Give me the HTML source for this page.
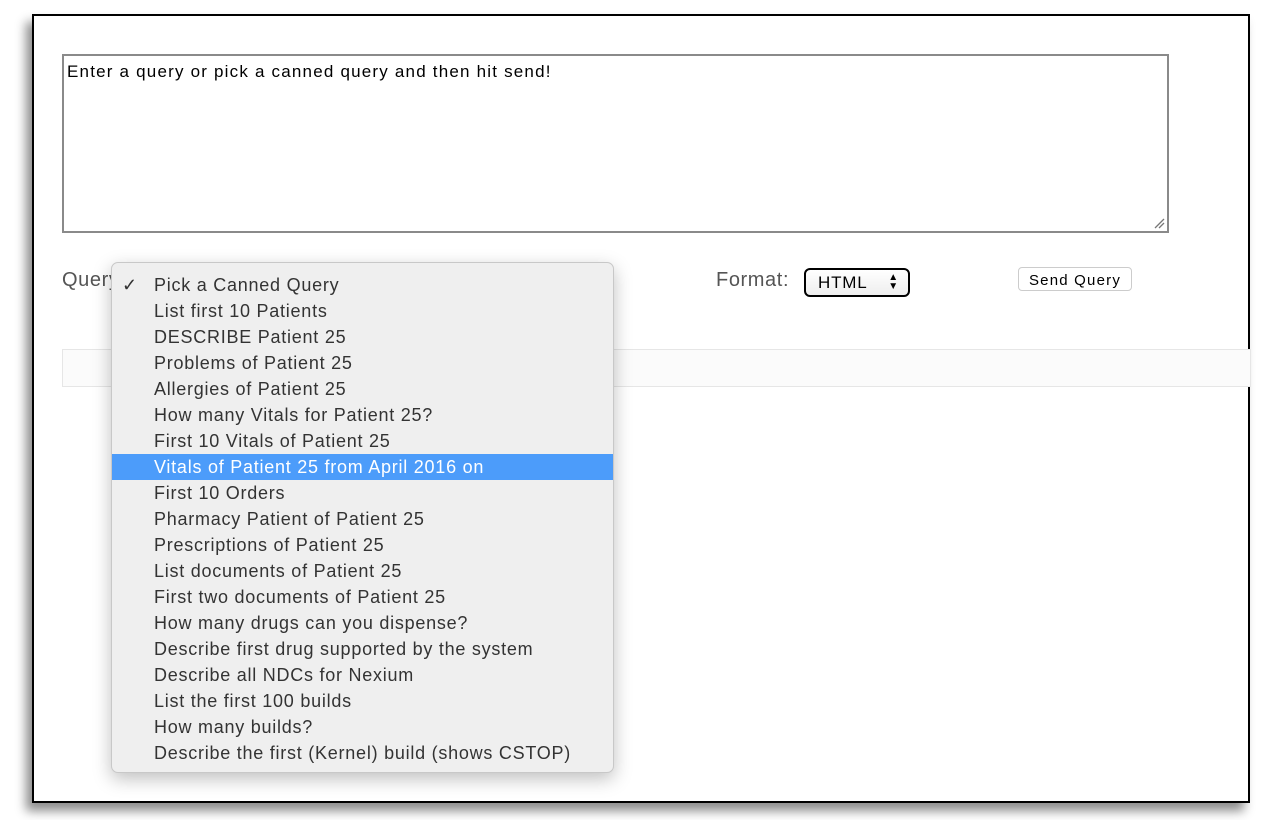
<!DOCTYPE html>
<html><head><style>
body{margin:0;width:1276px;height:820px;background:#fff;position:relative;overflow:hidden;font-family:"Liberation Sans",sans-serif}
.win{position:absolute;left:32px;top:14px;width:1214px;height:785px;border:2px solid #000;background:#fff;box-shadow:-6px 8px 10px rgba(0,0,0,.45)}
.ta{position:absolute;left:62px;top:54px;width:1103px;height:175px;border:2px solid #8a8a8a;background:#fff;font-size:17px;letter-spacing:1.2px;color:#000}
.ta span{position:absolute;left:3px;top:6px}
.bar{position:absolute;left:62px;top:349px;width:1187px;height:36px;border:1px solid #e6e6e6;background:#fbfbfb}
.lbl{position:absolute;font-size:20px;color:#555;letter-spacing:0.6px}
.sel{position:absolute;left:804px;top:268px;width:106px;height:29px;border:2px solid #000;border-radius:6px;background:linear-gradient(#fff,#eee);font-size:17px;letter-spacing:0.8px;box-sizing:border-box}
.btn{position:absolute;left:1018px;top:267px;width:114px;height:24px;border:1px solid #ccc;border-radius:4px;background:#fff;font-size:15px;letter-spacing:1.2px;text-align:center;line-height:25px;box-sizing:border-box}
.menu{position:absolute;left:111px;top:262px;width:503px;height:511px;background:#efefef;border:1px solid #c8c8c8;border-radius:7px;box-shadow:0 6px 18px rgba(0,0,0,.25);box-sizing:border-box;padding-top:9px;font-size:18px;letter-spacing:0.75px;color:#333}
.it{height:26px;line-height:26px;padding-left:42px;position:relative}
.it.h{background:#4c9cfa;color:#fff}
.chk{position:absolute;left:10px;top:0}
</style></head><body>
<div class="win"></div>
<div class="ta"><span>Enter a query or pick a canned query and then hit send!</span>
<svg style="position:absolute;right:2px;bottom:2px" width="12" height="12"><path d="M2 11L11 2M6 11L11 6" stroke="#777" stroke-width="1.3"/></svg></div>
<div class="bar"></div>
<div class="lbl" style="left:62px;top:269px">Query</div>
<div class="lbl" style="left:716px;top:269px">Format:</div>
<div class="sel"><span style="position:absolute;left:12px;top:3px">HTML</span><span style="position:absolute;right:9px;top:3px;font-size:10px;line-height:9px">▲<br>▼</span></div>
<div class="btn">Send Query</div>
<div class="menu">
<div class="it"><span class="chk">✓</span>Pick a Canned Query</div>
<div class="it">List first 10 Patients</div>
<div class="it">DESCRIBE Patient 25</div>
<div class="it">Problems of Patient 25</div>
<div class="it">Allergies of Patient 25</div>
<div class="it">How many Vitals for Patient 25?</div>
<div class="it">First 10 Vitals of Patient 25</div>
<div class="it h">Vitals of Patient 25 from April 2016 on</div>
<div class="it">First 10 Orders</div>
<div class="it">Pharmacy Patient of Patient 25</div>
<div class="it">Prescriptions of Patient 25</div>
<div class="it">List documents of Patient 25</div>
<div class="it">First two documents of Patient 25</div>
<div class="it">How many drugs can you dispense?</div>
<div class="it">Describe first drug supported by the system</div>
<div class="it">Describe all NDCs for Nexium</div>
<div class="it">List the first 100 builds</div>
<div class="it">How many builds?</div>
<div class="it">Describe the first (Kernel) build (shows CSTOP)</div>
</div>
</body></html>
